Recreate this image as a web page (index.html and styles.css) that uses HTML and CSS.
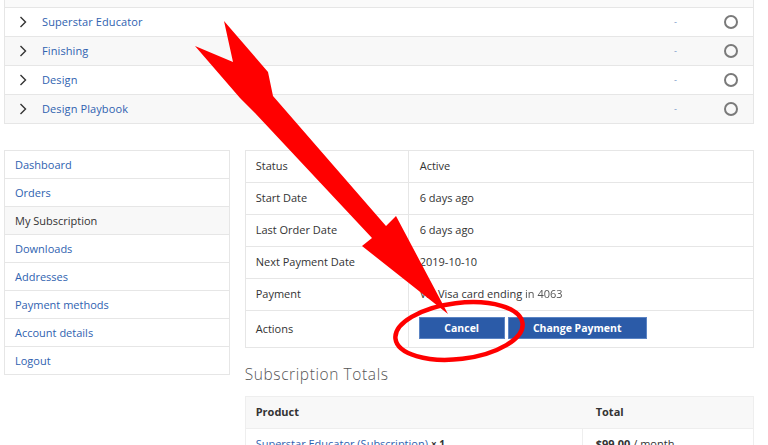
FILE: index.html
```html
<!DOCTYPE html>
<html>
<head>
<meta charset="utf-8">
<link rel="stylesheet" href="styles.css">
</head>
<body>
<div class="page">
  <div class="modules">
    <div class="topcut"></div>
    <div class="mod-row">
      <span class="chev"><svg width="8" height="12" viewBox="0 0 8 12"><polyline points="1.5,1 6.5,6 1.5,11" fill="none" stroke="#333" stroke-width="1.4"/></svg></span>
      <a class="mod-title">Superstar Educator</a>
      <span class="mod-dash">-</span>
      <span class="mod-circle"></span>
    </div>
    <div class="mod-row alt">
      <span class="chev"><svg width="8" height="12" viewBox="0 0 8 12"><polyline points="1.5,1 6.5,6 1.5,11" fill="none" stroke="#333" stroke-width="1.4"/></svg></span>
      <a class="mod-title">Finishing</a>
      <span class="mod-dash">-</span>
      <span class="mod-circle"></span>
    </div>
    <div class="mod-row">
      <span class="chev"><svg width="8" height="12" viewBox="0 0 8 12"><polyline points="1.5,1 6.5,6 1.5,11" fill="none" stroke="#333" stroke-width="1.4"/></svg></span>
      <a class="mod-title">Design</a>
      <span class="mod-dash">-</span>
      <span class="mod-circle"></span>
    </div>
    <div class="mod-row alt">
      <span class="chev"><svg width="8" height="12" viewBox="0 0 8 12"><polyline points="1.5,1 6.5,6 1.5,11" fill="none" stroke="#333" stroke-width="1.4"/></svg></span>
      <a class="mod-title">Design Playbook</a>
      <span class="mod-dash">-</span>
      <span class="mod-circle"></span>
    </div>
  </div>

  <div class="account">
    <nav class="sidebar">
      <a class="nav-item">Dashboard</a>
      <a class="nav-item">Orders</a>
      <a class="nav-item active">My Subscription</a>
      <a class="nav-item">Downloads</a>
      <a class="nav-item">Addresses</a>
      <a class="nav-item">Payment methods</a>
      <a class="nav-item">Account details</a>
      <a class="nav-item">Logout</a>
    </nav>
    <div class="content">
      <div class="details">
        <div class="d-row"><div class="d-label">Status</div><div class="d-val">Active</div></div>
        <div class="d-row"><div class="d-label">Start Date</div><div class="d-val">6 days ago</div></div>
        <div class="d-row"><div class="d-label">Last Order Date</div><div class="d-val">6 days ago</div></div>
        <div class="d-row"><div class="d-label">Next Payment Date</div><div class="d-val">2019-10-10</div></div>
        <div class="d-row"><div class="d-label">Payment</div><div class="d-val"><span>Via Visa card ending&nbsp;</span><span class="blur">in 4063</span></div></div>
        <div class="d-row actions"><div class="d-label">Actions</div><div class="d-val btns"><a class="btn btn-cancel">Cancel</a><a class="btn btn-change">Change Payment</a></div></div>
      </div>
      <h2 class="totals-title">Subscription Totals</h2>
      <div class="totals">
        <div class="t-row head"><div class="t-prod">Product</div><div class="t-total">Total</div></div>
        <div class="t-row"><div class="t-prod"><a class="t-link">Superstar Educator (Subscription)</a> <strong class="qty">× 1</strong></div><div class="t-total"><strong>$99.00</strong> / month</div></div>
      </div>
    </div>
  </div>

  <svg class="annot" width="768" height="445" viewBox="0 0 768 445">
    <polygon points="224,21 268,72 273,96 386,226 396,216 448,314 362,246 372,238 255,113 240,98 195,46 233,62" fill="#ff0000"/>
    <ellipse cx="459" cy="331" rx="64" ry="28" transform="rotate(-7 459 331)" fill="none" stroke="#ff0000" stroke-width="4.5"/>
  </svg>
</div>
</body>
</html>
```

FILE: styles.css
```css
* { box-sizing: border-box; }
html, body { margin: 0; padding: 0; }
body {
  background: #fff;
  font-family: "Open Sans", "Liberation Sans", sans-serif;
  font-size: 11px;
  color: #333;
  width: 768px;
  height: 445px;
  overflow: hidden;
}
.page {
  position: relative;
  width: 768px;
  height: 445px;
  padding: 0 14px 0 4px;
}
a { color: #2f62b0; text-decoration: none; }

.modules {
  width: 750px;
  border-left: 1px solid #e6e6e6;
  border-right: 1px solid #e6e6e6;
}
.topcut {
  height: 8px;
  background: #fafafa;
  border-bottom: 1px solid #e6e6e6;
}
.mod-row {
  height: 29px;
  display: flex;
  align-items: center;
  padding-bottom: 2px;
  border-bottom: 1px solid #e6e6e6;
  background: #fff;
}
.mod-row.alt { background: #f8f8f8; }
.chev {
  width: 37px;
  padding-left: 14px;
  padding-top: 2px;
  display: flex;
  align-items: center;
}
.mod-title { flex: 1; font-size: 11px; letter-spacing: 0.1px; }
.mod-dash {
  width: 50px;
  color: #7a9ac8;
  font-size: 9px;
}
.mod-circle {
  width: 14px;
  height: 14px;
  border: 2px solid #7a7a7a;
  border-radius: 50%;
  margin-right: 15px;
  margin-top: 2px;
}

.account {
  display: flex;
  margin-top: 26px;
  gap: 15px;
}
.sidebar {
  width: 226px;
  border: 1px solid #e6e6e6;
  border-bottom: none;
  align-self: flex-start;
  display: flex;
  flex-direction: column;
}
.nav-item {
  height: 28px;
  display: flex;
  align-items: center;
  padding-left: 10px;
  padding-bottom: 1px;
  border-bottom: 1px solid #e6e6e6;
  font-size: 11px;
}
.nav-item.active { color: #333; background: #f8f8f8; }

.content { width: 510px; }
.details {
  border: 1px solid #e6e6e6;
  border-bottom: none;
}
.d-row {
  display: flex;
  height: 32px;
  border-bottom: 1px solid #e6e6e6;
}
.d-row.actions { height: 37px; }
.d-label {
  width: 163px;
  border-right: 1px solid #e6e6e6;
  padding-left: 10px;
  padding-bottom: 2px;
  display: flex;
  align-items: center;
}
.d-val {
  flex: 1;
  padding-left: 11px;
  padding-bottom: 2px;
  display: flex;
  align-items: center;
}
.blur { color: #555; filter: blur(0.6px); }
.btns { gap: 3px; padding-left: 10px; }
.btn {
  height: 22px;
  display: flex;
  align-items: center;
  justify-content: center;
  background: #2b5ba8;
  color: #fff;
  font-weight: 700;
  font-size: 10.5px;
  border: 1px solid #5b84c4;
}
.btn-cancel { width: 86px; }
.btn-change { width: 139px; }

.totals-title {
  margin: 15px 0 0;
  font-size: 15.5px;
  font-weight: 300;
  color: #555;
  letter-spacing: 0.6px;
  height: 33px;
}
.totals {
  border: 1px solid #eee;
  border-bottom: none;
}
.t-row {
  display: flex;
  height: 32px;
  border-bottom: 1px solid #eee;
}
.t-row.head { background: #f8f8f8; font-weight: 700; }
.t-prod {
  width: 337px;
  border-right: 1px solid #eee;
  padding-left: 10px;
  padding-bottom: 2px;
  display: flex;
  align-items: center;
  gap: 3px;
}
.t-row.head .t-prod { border-right: none; }
.t-total {
  flex: 1;
  padding-left: 13px;
  padding-bottom: 2px;
  display: flex;
  align-items: center;
  gap: 3px;
}
.qty { font-size: 10px; }

.annot {
  position: absolute;
  left: 0;
  top: 0;
  pointer-events: none;
}
```
